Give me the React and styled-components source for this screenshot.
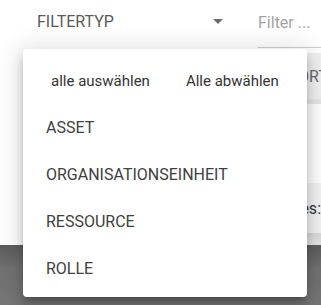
import styled, { createGlobalStyle } from "styled-components"

const GlobalStyle = createGlobalStyle`
    html, body {
        margin: 0;
        padding: 0;
        background: #ffffff;
        font-family: Roboto, "Liberation Sans", sans-serif;
    }
`

const filterTypes = ['ASSET', 'ORGANISATIONSEINHEIT', 'RESSOURCE', 'ROLLE']

export default function App() {
    return (
        <>
            <GlobalStyle />
            <Page>
                <Dialog>
                    <Toolbar>
                        <SelectBox>
                            <SelectLabel>FILTERTYP</SelectLabel>
                            <Arrow />
                        </SelectBox>
                        <FilterInput placeholder="Filter ..." />
                    </Toolbar>
                    <Body>
                        <LeftColumn />
                        <RightColumn>
                            <HeadBar>ORT</HeadBar>
                            <Spacer />
                            <FootBar>Types:</FootBar>
                            <FootShade />
                        </RightColumn>
                    </Body>
                </Dialog>
                <Backdrop />
                <Menu>
                    <ButtonRow>
                        <TextButton>alle auswählen</TextButton>
                        <TextButton>Alle abwählen</TextButton>
                    </ButtonRow>
                    {filterTypes.map((type) =>
                        <MenuItem key={type}>{type}</MenuItem>
                    )}
                </Menu>
            </Page>
        </>
    )
}

const Page = styled.div`
    position: relative;
    width: 321px;
    height: 305px;
    display: flex;
    flex-direction: column;
    overflow: hidden;
`
const Dialog = styled.div`
    height: 245px;
    background: #ffffff;
    display: flex;
    flex-direction: column;
`
const Toolbar = styled.div`
    height: 49px;
    display: flex;
    flex-direction: row;
    align-items: flex-start;
    padding-left: 37px;
    box-sizing: border-box;
`
const SelectBox = styled.div`
    flex-shrink: 0;
    width: 193px;
    height: 36px;
    display: flex;
    align-items: center;
    justify-content: space-between;
    padding-right: 7px;
    box-sizing: border-box;
    margin-top: 3px;
`
const SelectLabel = styled.span`
    font-size: 16px;
    color: #5a5a5a;
`
const Arrow = styled.span`
    width: 0;
    height: 0;
    border-left: 5px solid transparent;
    border-right: 5px solid transparent;
    border-top: 5px solid #6a6a6a;
`
const FilterInput = styled.input`
    flex-shrink: 0;
    margin-left: 28px;
    width: 80px;
    height: 37px;
    margin-top: 11px;
    box-sizing: border-box;
    border: none;
    border-bottom: 1px solid #cfcfcf;
    padding: 0 0 13px;
    font-family: Roboto, "Liberation Sans", sans-serif;
    font-size: 16px;
    outline: none;
    &::placeholder {
        color: #a3a3a3;
    }
`
const Body = styled.div`
    flex: 1;
    display: flex;
    flex-direction: row;
`
const LeftColumn = styled.div`
    width: 258px;
    flex-shrink: 0;
`
const RightColumn = styled.div`
    flex: 1;
    display: flex;
    flex-direction: column;
    overflow: hidden;
`
const HeadBar = styled.div`
    height: 46px;
    margin-top: 4px;
    background: #f1f1f1;
    border-bottom: 5px solid #e6e6e6;
    display: flex;
    align-items: center;
    padding-left: 40px;
    font-size: 16px;
    color: #6b6b6b;
    white-space: nowrap;
`
const Spacer = styled.div`
    flex: 1;
`
const FootBar = styled.div`
    height: 50px;
    background: #f3f3f3;
    display: flex;
    align-items: center;
    justify-content: flex-end;
    font-size: 16px;
    color: #333333;
    white-space: nowrap;
`
const FootShade = styled.div`
    height: 12px;
    background: linear-gradient(#d8d8d8, #e6e6e6);
`
const Backdrop = styled.div`
    flex: 1;
    background: linear-gradient(#5c5c5c, #727272 40%, #767676);
`
const Menu = styled.div`
    position: absolute;
    left: 23px;
    top: 49px;
    width: 284px;
    height: 248px;
    box-sizing: border-box;
    padding: 8px 0 5px;
    background: #ffffff;
    border-radius: 4px;
    box-shadow: 0px 5px 5px -3px rgba(0, 0, 0, 0.2), 0px 8px 10px 1px rgba(0, 0, 0, 0.14), 0px 3px 24px 5px rgba(0, 0, 0, 0.13);
    display: flex;
    flex-direction: column;
`
const ButtonRow = styled.div`
    height: 47px;
    display: flex;
    flex-direction: row;
    align-items: center;
    gap: 20px;
    padding: 0 20px;
`
const TextButton = styled.button`
    background: none;
    border: none;
    padding: 6px 8px;
    font-family: Roboto, "Liberation Sans", sans-serif;
    font-size: 15px;
    color: #333333;
    cursor: pointer;
`
const MenuItem = styled.div`
    height: 47px;
    display: flex;
    align-items: center;
    padding-left: 23px;
    font-size: 16px;
    color: #404040;
`
